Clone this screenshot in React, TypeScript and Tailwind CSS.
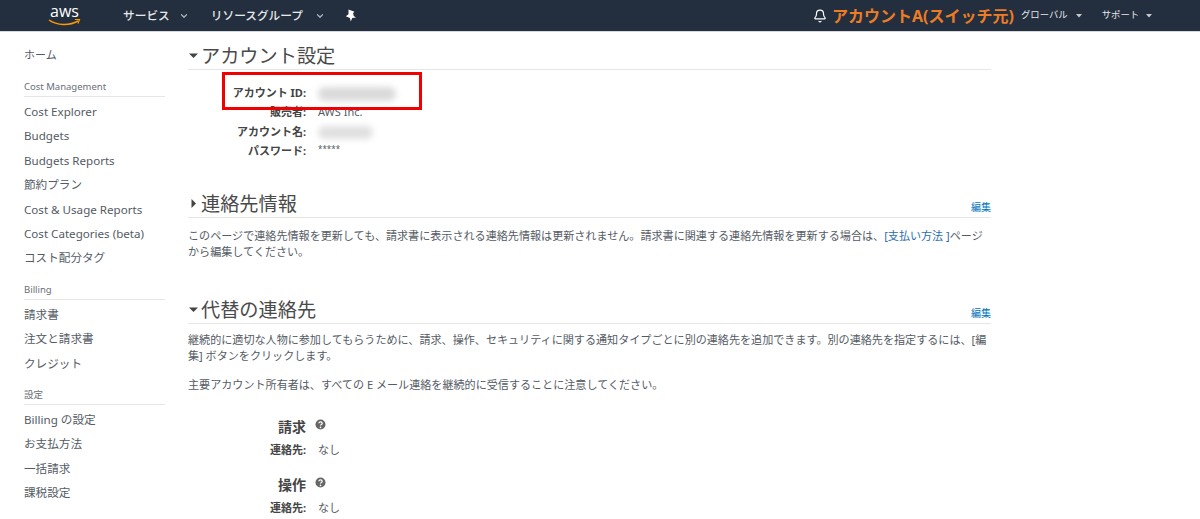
import { Bell, ChevronDown } from "lucide-react";

const FONT = "font-['Noto_Sans','Noto_Sans_CJK_JP',sans-serif]";

const sidebar = [
  {
    title: "Cost Management",
    items: ["Cost Explorer", "Budgets", "Budgets Reports", "節約プラン", "Cost & Usage Reports", "Cost Categories (beta)", "コスト配分タグ"],
  },
  { title: "Billing", items: ["請求書", "注文と請求書", "クレジット"] },
  { title: "設定", items: ["Billing の設定", "お支払方法", "一括請求", "課税設定"] },
];

function Caret({ open }: { open: boolean }) {
  return (
    <svg width="11" height="11" viewBox="0 0 11 11" className="shrink-0 mr-[2px]">
      <path d={open ? "M1 3.500h9L5.500 8z" : "M3.500 1v9L8 5.500z"} fill="#444" />
    </svg>
  );
}

function SectionHead({ title, open, edit }: { title: string; open: boolean; edit?: boolean }) {
  return (
    <div className="flex items-center h-[28px] border-b border-[#e6e6e6]">
      <Caret open={open} />
      <h2 className="text-[19.2px] leading-[26px] text-[#4a4a4a]">{title}</h2>
      {edit && <a className="ml-auto mt-[8px] text-[10px] text-[#0073bb]">編集</a>}
    </div>
  );
}

function Field({ label, children }: { label: string; children?: React.ReactNode }) {
  return (
    <div className="flex h-[19.6px] items-center">
      <span className="w-[118px] text-right text-[11px] font-bold text-[#444]">{label}</span>
      <span className="ml-[12px] text-[11px] text-[#545b64]">{children}</span>
    </div>
  );
}

function HelpIcon() {
  return (
    <svg width="11" height="11" viewBox="0 0 11 11" className="ml-[9px] mb-[3px]">
      <circle cx="5.500" cy="5.500" r="5" fill="#666" />
      <path d="M3.800 4.300c.2-2 3.400-1.900 3.400 0 0 1.200-1.700 1.200-1.700 2.300" stroke="#fff" strokeWidth="1.200" fill="none" />
      <circle cx="5.500" cy="8.400" r=".8" fill="#fff" />
    </svg>
  );
}

function Contact({ title }: { title: string }) {
  return (
    <div className="flex flex-col">
      <div className="flex items-center h-[22px]">
        <span className="w-[118px] text-right text-[14px] font-bold text-[#444]">{title}</span>
        <HelpIcon />
      </div>
      <div className="flex items-center h-[20px] mt-[3px]">
        <span className="w-[118px] text-right text-[11px] font-bold text-[#444]">連絡先:</span>
        <span className="ml-[12px] text-[11px] text-[#545b64]">なし</span>
      </div>
    </div>
  );
}

export default function App() {
  return (
    <div className={`${FONT} relative h-[519px] w-[1200px] overflow-hidden bg-white`}>
      <header className="flex h-[32px] items-center bg-[#232f3e] border-b border-[#d5d9dc] text-[#e6e8ea]">
        <div className="ml-[48px] flex w-[33px] flex-col items-center">
          <span className="h-[15px] text-[16px] leading-[15px] text-white font-['Open_Sans',sans-serif]">aws</span>
          <svg width="33" height="8" viewBox="0 0 33 8">
            <path d="M1 1c8 5.500 20 6 29 1" stroke="#f90" strokeWidth="1.500" fill="none" />
            <path d="M27 .5l4.500 0-1.500 4" stroke="#f90" strokeWidth="1.200" fill="none" />
          </svg>
        </div>
        <span className="ml-[42px] text-[11.7px] font-medium">サービス</span>
        <ChevronDown size={10} strokeWidth={3} className="ml-[9px] text-[#aab0b6]" />
        <span className="ml-[22px] text-[11.7px] font-medium">リソースグループ</span>
        <ChevronDown size={10} strokeWidth={3} className="ml-[12px] text-[#aab0b6]" />
        <svg width="12" height="13" viewBox="0 0 12 13" className="ml-[20px]">
          <path d="M3.500 .5l6 2.300-1.400 1.200.6 3 2.300 1.600-3.800.5L5.800 12.500 4.900 8.900.8 7.300l2.700-2.100z" fill="#fff" />
        </svg>
        <Bell size={14} className="ml-[456px] text-white" />
        <span className="ml-[5px] text-[16px] font-bold text-[#ec7c25] whitespace-nowrap">アカウントA(スイッチ元)</span>
        <span className="ml-[7px] text-[9.400px]">グローバル</span>
        <svg width="6" height="4" viewBox="0 0 6 4" className="ml-[8px]"><path d="M0 0h6L3 3.500z" fill="#c5c9cd" /></svg>
        <span className="ml-[20px] text-[9.400px]">サポート</span>
        <svg width="6" height="4" viewBox="0 0 6 4" className="ml-[7px]"><path d="M0 0h6L3 3.500z" fill="#c5c9cd" /></svg>
      </header>

      <div className="flex">
        <aside className="w-[141px] ml-[24px] shrink-0 pt-[15px] text-[#545b64]">
          <div className="h-[16px] leading-[16px] text-[11px]">ホーム</div>
          {sidebar.map((group, i) => (
            <div key={group.title} className={i === 0 ? "mt-[16px]" : "mt-[11px]"}>
              <div className="h-[18px] text-[9.500px] leading-[16px] border-b border-[#e6e6e6] text-[#687078]">{group.title}</div>
              <ul className="pt-[3px]">
                {group.items.map((item) => (
                  <li key={item} className="h-[24.400px] leading-[24px] text-[11.600px] whitespace-nowrap">{item}</li>
                ))}
              </ul>
            </div>
          ))}
        </aside>

        <main className="ml-[23px] w-[803px] pt-[10px] text-[#545b64]">
          <SectionHead title="アカウント設定" open />
          <div className="pt-[13px]">
            <Field label="アカウント ID:">
              <span className="inline-block h-[14px] w-[78px] rounded-full bg-[#dadada] blur-[3px] align-middle" />
            </Field>
            <Field label="販売者:">AWS Inc.</Field>
            <Field label="アカウント名:">
              <span className="inline-block h-[13px] w-[55px] rounded-full bg-[#e0e0e0] blur-[3px] align-middle" />
            </Field>
            <Field label="パスワード:"><span className="text-[8px] align-top">*****</span></Field>
          </div>

          <div className="mt-[29px]">
            <SectionHead title="連絡先情報" open={false} edit />
            <p className="mt-[10px] text-[11.080px] leading-[16px]">
              このページで連絡先情報を更新しても、請求書に表示される連絡先情報は更新されません。請求書に関連する連絡先情報を更新する場合は、
              <span className="text-[#2a6db0]">[支払い方法 ]</span>ページ<br />から編集してください。
            </p>
          </div>

          <div className="mt-[36px]">
            <SectionHead title="代替の連絡先" open edit />
            <p className="mt-[8px] text-[11.080px] leading-[16px]">
              継続的に適切な人物に参加してもらうために、請求、操作、セキュリティに関する通知タイプごとに別の連絡先を追加できます。別の連絡先を指定するには、[編集] ボタンをクリックします。
            </p>
            <p className="mt-[13px] text-[11.080px] leading-[16px]">主要アカウント所有者は、すべての E メール連絡を継続的に受信することに注意してください。</p>
          </div>

          <div className="mt-[22px] flex flex-col gap-[13px]">
            <Contact title="請求" />
            <Contact title="操作" />
          </div>
        </main>
      </div>

      <div className="absolute left-[222px] top-[72px] h-[38px] w-[200px] border-[3px] border-[#f00000]" />
    </div>
  );
}
